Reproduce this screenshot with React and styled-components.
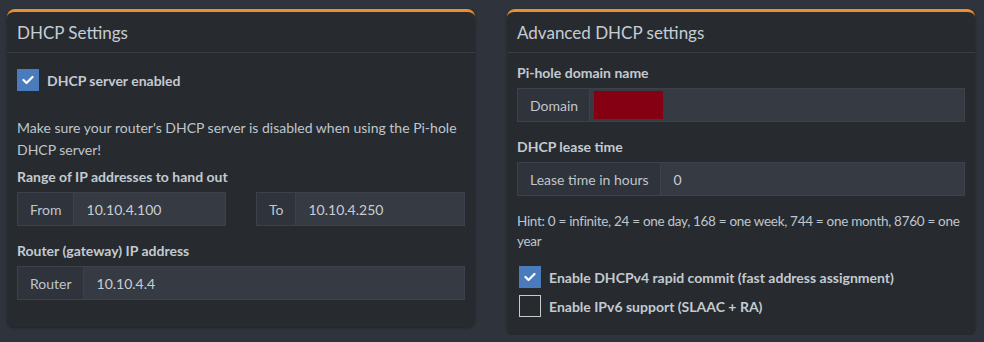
import React from "react";
import styled, { createGlobalStyle } from "styled-components";

const GlobalStyle = createGlobalStyle`
  html, body {
    margin: 0;
    padding: 0;
    background: #2f343c;
    font-family: Lato, "Open Sans", sans-serif;
    font-size: 14px;
    color: #bfc6cd;
  }
`;

const Page = styled.div`
  display: grid;
  grid-template-columns: 468px 468px;
  column-gap: 32px;
  align-items: start;
  padding: 9px 0 0 7px;
`;

const Card = styled.div`
  background: #272b30;
  border-top: 3px solid #ed8e2d;
  border-radius: 8px;
  box-shadow: 0 1px 3px rgba(0, 0, 0, 0.35);
`;

const CardHeader = styled.div`
  padding: 0 10px;
  height: 40px;
  display: flex;
  align-items: center;
  border-bottom: 1px solid #383d45;
`;

const CardTitle = styled.h3`
  margin: 0;
  font-size: 17px;
  font-weight: 400;
  color: #c6cdd4;
`;

const CardBody = styled.div`
  padding: ${(p) => p.$pad || "10px 10px 27px"};
`;

const Group = styled.div`
  margin-bottom: ${(p) => p.$mb ?? 15}px;
`;

const Label = styled.div`
  font-weight: 700;
  line-height: 20px;
  margin-bottom: 5px;
  color: #c3cad1;
`;

const Row = styled.div`
  display: grid;
  grid-template-columns: 1fr 1fr;
  column-gap: 30px;
`;

const InputGroup = styled.div`
  display: flex;
  height: 34px;
  box-sizing: border-box;
  border: 1px solid #3c414a;
  background: #363a42;
`;

const Addon = styled.div`
  display: flex;
  align-items: center;
  padding: 0 11px 0 12px;
  background: #2f333b;
  border-right: 1px solid #3c414a;
  color: #bfc6cd;
  white-space: nowrap;
`;

const Value = styled.div`
  display: flex;
  align-items: center;
  flex: 1;
  padding: 0 13px;
  color: #c8ced4;
`;

const Redacted = styled.span`
  display: block;
  width: 69px;
  height: 28px;
  margin-left: -9px;
  background: #860014;
`;

const Text = styled.p`
  margin: 0;
  line-height: ${(p) => p.$lh || 22}px;
`;

const Hint = styled.p`
  margin: 0;
  line-height: 20px;
  font-size: 13.5px;
  letter-spacing: -0.3px;
`;

const CheckRow = styled.label`
  display: flex;
  align-items: center;
  gap: 8px;
  margin-left: ${(p) => p.$indent || 0}px;
  margin-bottom: ${(p) => p.$mb || 0}px;
  font-weight: 700;
  color: #c3cad1;
`;

const Box = styled.span`
  display: flex;
  align-items: center;
  justify-content: center;
  width: 22px;
  height: 22px;
  box-sizing: border-box;
  background: ${(p) => (p.$checked ? "#4a7bbd" : "transparent")};
  border: ${(p) => (p.$checked ? "none" : "1px solid #c9c9c9")};
`;

function Checkbox({ checked, children, indent, mb }) {
  return (
    <CheckRow $indent={indent} $mb={mb}>
      <Box $checked={checked}>
        {checked && (
          <svg width="12" height="10" viewBox="0 0 12 10">
            <polyline
              points="1.5,5 4.5,8 10.5,2"
              fill="none"
              stroke="#fff"
              strokeWidth="2.2"
              strokeLinecap="round"
              strokeLinejoin="round"
            />
          </svg>
        )}
      </Box>
      {children}
    </CheckRow>
  );
}

export default function App() {
  return (
    <>
      <GlobalStyle />
      <Page>
        <Card>
          <CardHeader>
            <CardTitle>DHCP Settings</CardTitle>
          </CardHeader>
          <CardBody $pad="16px 10px 27px">
            <Checkbox checked mb={26}>DHCP server enabled</Checkbox>
            <Group $mb={6}>
              <Text>
                Make sure your router's DHCP server is disabled when using the
                Pi-hole DHCP server!
              </Text>
            </Group>
            <Group>
              <Label>Range of IP addresses to hand out</Label>
              <Row>
                <InputGroup>
                  <Addon>From</Addon>
                  <Value>10.10.4.100</Value>
                </InputGroup>
                <InputGroup>
                  <Addon>To</Addon>
                  <Value>10.10.4.250</Value>
                </InputGroup>
              </Row>
            </Group>
            <Group $mb={0}>
              <Label>Router (gateway) IP address</Label>
              <InputGroup>
                <Addon>Router</Addon>
                <Value>10.10.4.4</Value>
              </InputGroup>
            </Group>
          </CardBody>
        </Card>

        <Card>
          <CardHeader>
            <CardTitle>Advanced DHCP settings</CardTitle>
          </CardHeader>
          <CardBody $pad="10px 10px 18px">
            <Group $mb={15}>
              <Label>Pi-hole domain name</Label>
              <InputGroup>
                <Addon>Domain</Addon>
                <Value>
                  <Redacted />
                </Value>
              </InputGroup>
            </Group>
            <Group $mb={15}>
              <Label>DHCP lease time</Label>
              <InputGroup>
                <Addon>Lease time in hours</Addon>
                <Value>0</Value>
              </InputGroup>
            </Group>
            <Group $mb={15}>
              <Hint>
                Hint: 0 = infinite, 24 = one day, 168 = one week, 744 = one
                month, 8760 = one year
              </Hint>
            </Group>
            <Checkbox checked indent={2} mb={7}>
              Enable DHCPv4 rapid commit (fast address assignment)
            </Checkbox>
            <Checkbox indent={2}>Enable IPv6 support (SLAAC + RA)</Checkbox>
          </CardBody>
        </Card>
      </Page>
    </>
  );
}
